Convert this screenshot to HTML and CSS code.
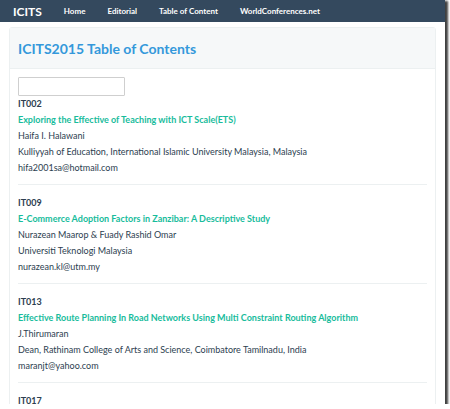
FILE: index.html
```html
<!DOCTYPE html>
<html>
<head>
<meta charset="utf-8">
<link rel="stylesheet" href="styles.css">
</head>
<body>
<div class="frame">
  <nav class="navbar">
    <span class="brand">ICITS</span>
    <a class="nav-link">Home</a>
    <a class="nav-link">Editorial</a>
    <a class="nav-link">Table of Content</a>
    <a class="nav-link">WorldConferences.net</a>
  </nav>
  <div class="panel">
    <div class="panel-heading">ICITS2015 Table of Contents</div>
    <div class="panel-body">
      <input class="search" type="text">
      <div class="entry">
        <div class="code">IT002</div>
        <div class="title">Exploring the Effective of Teaching with ICT Scale(ETS)</div>
        <div class="line">Haifa I. Halawani</div>
        <div class="line">Kulliyyah of Education, International Islamic University Malaysia, Malaysia</div>
        <div class="line">hifa2001sa@hotmail.com</div>
      </div>
      <hr class="sep">
      <div class="entry">
        <div class="code">IT009</div>
        <div class="title">E-Commerce Adoption Factors in Zanzibar: A Descriptive Study</div>
        <div class="line">Nurazean Maarop &amp; Fuady Rashid Omar</div>
        <div class="line">Universiti Teknologi Malaysia</div>
        <div class="line">nurazean.kl@utm.my</div>
      </div>
      <hr class="sep">
      <div class="entry">
        <div class="code">IT013</div>
        <div class="title">Effective Route Planning In Road Networks Using Multi Constraint Routing Algorithm</div>
        <div class="line">J.Thirumaran</div>
        <div class="line">Dean, Rathinam College of Arts and Science, Coimbatore Tamilnadu, India</div>
        <div class="line">maranjt@yahoo.com</div>
      </div>
      <hr class="sep">
      <div class="entry">
        <div class="code">IT017</div>
      </div>
    </div>
  </div>
</div>
</body>
</html>
```
FILE: styles.css
```css
html, body {
  margin: 0;
  padding: 0;
  background: #ffffff;
}
body {
  font-family: Lato, "Open Sans", sans-serif;
  color: #2c3e50;
}
.frame {
  width: 445px;
  height: 404px;
  overflow: hidden;
  background: #ffffff;
  box-shadow: 2px 2px 2px 1px rgba(0, 0, 0, 0.75);
}
.navbar {
  height: 22px;
  background: #34495e;
  display: flex;
  align-items: center;
  padding-left: 13px;
}
.brand {
  color: #ffffff;
  font-weight: 700;
  font-size: 12px;
  margin-right: 22px;
}
.nav-link {
  color: #ffffff;
  font-weight: 700;
  font-size: 8px;
  margin-right: 22px;
}
.panel {
  margin: 5px 9px 0 9px;
  border: 1px solid #ecf0f1;
  border-radius: 3px;
}
.panel-heading {
  background: #f6f8f9;
  border-bottom: 1px solid #ecf0f1;
  height: 40px;
  display: flex;
  align-items: center;
  padding-left: 8px;
  color: #3498db;
  font-weight: 700;
  font-size: 14px;
}
.panel-body {
  padding: 8px 8px 0 8px;
}
.search {
  display: block;
  box-sizing: border-box;
  width: 107px;
  height: 19px;
  margin: 0;
  border: 1px solid #cfcfcf;
  border-radius: 1px;
  background: #ffffff;
}
.entry {
  font-size: 9px;
  line-height: 16px;
}
.code {
  font-weight: 700;
}
.title {
  color: #18bc9c;
  font-weight: 700;
}
.sep {
  border: 0;
  border-top: 1px solid #ecf0f1;
  margin: 8px 0 10px 0;
}
```
